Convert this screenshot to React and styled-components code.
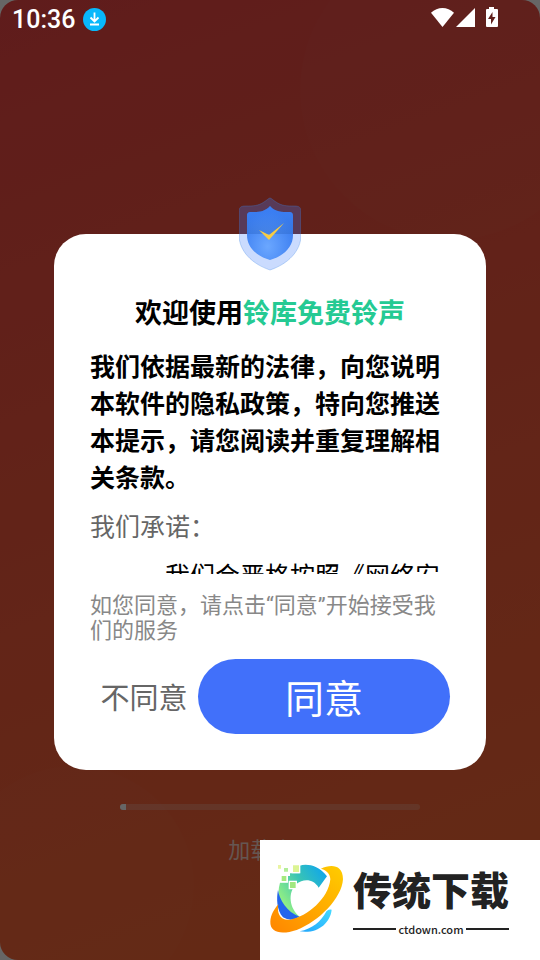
import React from "react";
import styled, { createGlobalStyle } from "styled-components";

const GlobalStyle = createGlobalStyle`
  *, *::before, *::after { box-sizing: border-box; }
  body {
    margin: 0;
    background: #fff;
    font-family: Roboto, "Noto Sans CJK SC", sans-serif;
  }
  button { font-family: inherit; border: 0; cursor: pointer; }
  p, h1 { margin: 0; }
`;

const Page = styled.div`
  display: grid;
  grid-template: minmax(100vh, auto) / minmax(0, 1fr);
  position: relative;
  overflow: hidden;
`;

const Layer = styled.div`
  grid-area: 1 / 1;
  display: flex;
  flex-direction: column;
`;

const Splash = styled(Layer)`
  position: relative;
  align-items: center;
  justify-content: flex-end;
  gap: 24px;
  padding-bottom: 93px;
  overflow: hidden;
  border-radius: 18px;
  background: linear-gradient(160deg, #ee4746 0%, #f75c3c 55%, #fc6b34 100%);
`;

const Bubble = styled.div`
  position: absolute;
  border-radius: 50%;
  background: rgba(255, 255, 255, 0.02);
  width: ${(p) => p.$size}px;
  height: ${(p) => p.$size}px;
`;

const TopBubble = styled(Bubble)`
  top: -60px;
  right: -60px;
`;

const BottomBubble = styled(Bubble)`
  bottom: -46px;
  left: -46px;
`;

const Track = styled.div`
  width: 300px;
  max-width: 80%;
  height: 6px;
  border-radius: 3px;
  overflow: hidden;
  background: rgba(255, 255, 255, 0.22);
`;

const Fill = styled.div`
  height: 100%;
  background: #fff;
`;

const Loading = styled.p`
  font-size: 22px;
  line-height: 33px;
  font-weight: 400;
  color: rgba(255, 255, 255, 0.75);
`;

const Shade = styled(Layer)`
  position: relative;
  background: rgba(0, 0, 0, 0.6);
`;

const StatusBar = styled.header`
  display: flex;
  align-items: center;
  justify-content: space-between;
  height: 40px;
  padding: 0 41px 2px 12px;
  color: #fff;
`;

const StatusGroup = styled.div`
  display: flex;
  align-items: center;
  gap: 8px;
`;

const SystemIcons = styled.div`
  display: flex;
  align-items: center;
  padding-bottom: 2px;
`;

const Clock = styled.time`
  padding-top: 2px;
  font-size: 25px;
  line-height: 38px;
  font-weight: 500;
`;

const DialogArea = styled.main`
  flex: 1;
  display: flex;
  align-items: center;
  justify-content: center;
  padding-top: 4px;
`;

const Dialog = styled.section`
  position: relative;
  width: 80%;
  padding: 60px 36px 36px;
  border-radius: 32px;
  background: #fff;
`;

const ShieldBadge = styled.div`
  position: absolute;
  top: -37px;
  left: 0;
  right: 0;
  display: flex;
  justify-content: center;
`;

const Title = styled.h1`
  font-size: 27px;
  line-height: 40px;
  font-weight: 700;
  text-align: center;
  color: #000;
`;

const AppName = styled.span`
  color: #25ca93;
`;

const Terms = styled.div`
  max-height: 225px;
  margin-top: 15px;
  overflow-y: auto;
  scrollbar-width: none;
  font-size: 25px;
  line-height: 37px;
  color: #000;
`;

const Lead = styled.p`
  font-weight: 700;
`;

const Promise = styled.p`
  margin-top: 12px;
  font-weight: 400;
  color: #666;
`;

const Clause = styled.p`
  margin-top: 12px;
  font-weight: 400;
  text-indent: 3em;
`;

const Notice = styled.p`
  margin-top: 19px;
  font-size: 22px;
  line-height: 25px;
  font-weight: 400;
  color: #888;
`;

const Actions = styled.div`
  display: flex;
  margin-top: 16px;
`;

const Decline = styled.button`
  flex: 3;
  padding: 0 0 2px;
  background: transparent;
  font-size: 29px;
  font-weight: 400;
  color: #666;
`;

const Accept = styled.button`
  flex: 7;
  height: 75px;
  padding: 0 0 2px;
  border-radius: 38px;
  background: #4170fa;
  font-size: 39px;
  font-weight: 400;
  color: #fff;
`;

const Brand = styled.aside`
  position: absolute;
  right: 0;
  bottom: 0;
  display: flex;
  align-items: center;
  gap: 8px;
  width: 280px;
  height: 120px;
  padding: 0 31px 0 9px;
  background: #fff;
`;

const BrandText = styled.div`
  flex: 1;
  color: #222;
`;

const BrandName = styled.p`
  padding-top: 2px;
  font-size: 39px;
  line-height: 56px;
  font-weight: 900;
  white-space: nowrap;
`;

const BrandUrl = styled.p`
  display: flex;
  align-items: center;
  gap: 2px;
  font-family: "Noto Sans CJK SC", sans-serif;
  font-size: 11px;
  line-height: 18px;
  font-weight: 500;

  &::before, &::after {
    content: "";
    flex: 1;
    height: 2px;
    background: #222;
  }
`;

const DownloadIcon = () => (
  <svg width="23" height="23" viewBox="0 0 23 23" aria-hidden="true">
    <circle cx="11.500" cy="11.500" r="11.500" fill="#08b8fb" />
    <path d="M11.500 4.500v8.500M7.500 9.500l4 4 4-4M7 16.500h9" fill="none" stroke="#fff" strokeWidth="1.800" />
  </svg>
);

const SignalIcons = () => (
  <svg width="68" height="22" viewBox="0 0 68 22" fill="#fff" aria-hidden="true">
    <path d="M0 5.800C6.500-.6 16.500-.6 23 5.800L11.500 20Z" />
    <path d="M44 1v19H25Z" />
    <path fillRule="evenodd" d="M58 0h5v2h3q1 0 1 1v16q0 1-1 1H56q-1 0-1-1V3q0-1 1-1h2ZM61.500 5L57 12h3v5.500l4.500-7.500h-3Z" />
  </svg>
);

const shieldOuter =
  "M31 1C32 1 34 3 37 5C43 9 48 9 55 9C60 9 62 10 62 15V38C62 54 49 67 31 73C13 67 0 54 0 38V15C0 10 2 9 7 9C14 9 19 9 25 5C28 3 30 1 31 1Z";
const shieldInner =
  "M31 9C36 15 43 15 50 15C53 15 54 16 54 19V38C54 50 45 59 31 63C17 59 8 50 8 38V19C8 16 9 15 12 15C19 15 26 15 31 9Z";

const Shield = () => (
  <svg width="62" height="74" viewBox="0 0 62 74" aria-hidden="true">
    <defs>
      <radialGradient id="shieldGlow" cx="0.45" cy="0.75" r="0.65">
        <stop offset="0" stopColor="#6ba7ff" />
        <stop offset="1" stopColor="#397cf0" />
      </radialGradient>
      <linearGradient id="shieldShade" x1="0" y1="0" x2="0" y2="1">
        <stop offset="0" stopColor="#3f86ff" stopOpacity="0.300" />
        <stop offset="1" stopColor="#23549f" stopOpacity="0.700" />
      </linearGradient>
      <clipPath id="shieldTop"><rect width="62" height="37" /></clipPath>
    </defs>
    <path d={shieldOuter} fill="#3f7ffa" fillOpacity="0.280" />
    <path d={shieldOuter} fill="none" stroke="#3b83e6" strokeOpacity="0.300" />
    <path d={shieldInner} fill="url(#shieldGlow)" />
    <path d={shieldInner} fill="url(#shieldShade)" clipPath="url(#shieldTop)" />
    <path d="M20 33l10 5L45 26L30 43Z" fill="#f8cc43" />
  </svg>
);

const BrandMark = () => (
  <svg width="76" height="76" viewBox="27 24 228 228" aria-hidden="true">
    <defs>
      <linearGradient id="ring" x1="0" y1="0.700" x2="1" y2="0">
        <stop offset="0" stopColor="#9cf47e" />
        <stop offset="0.500" stopColor="#38c4b5" />
        <stop offset="1" stopColor="#08a0f6" />
      </linearGradient>
      <linearGradient id="orbit" x1="0" y1="1" x2="1" y2="0">
        <stop offset="0" stopColor="#ff8500" />
        <stop offset="1" stopColor="#ffcd00" />
      </linearGradient>
      <linearGradient id="tail" x1="0" y1="1" x2="1" y2="0">
        <stop offset="0" stopColor="#20a5fc" />
        <stop offset="1" stopColor="#45d9ff" />
      </linearGradient>
    </defs>
    <path d="M201 67C174 32 140 29 119 35V58H90V66H84V86H60C50 122 56 162 73 190H121C87 164 83 116 108 91C132 72 161 76 176 101Z" fill="url(#ring)" />
    <path d="M54 108C58 137 81 174 118 188Q94 205 69 190C50 170 49 132 54 108Z" fill="#2365ec" />
    <path d="M119 232C157 224 183 203 200 171Q207 166 215 167C211 208 171 241 119 232Z" fill="url(#tail)" />
    <path d="M183 44C211 31 249 30 249 76C246 132 177 203 110 228C68 242 29 239 31 202C32 183 43 165 55 151C50 178 60 201 91 197C142 188 206 133 211 76C211 62 202 49 183 44Z" fill="url(#orbit)" />
    <g stroke="#fff" strokeWidth="4">
      <path d="M97 32h22v24H97Z" fill="#dcf493" />
      <path d="M70 40h16v15H70Z" fill="#b3ee98" />
      <path d="M52 31h13v15H52Z" fill="#e9f4a1" />
      <path d="M63 64h18v19H63Z" fill="#a4e97e" />
      <path d="M88 82h21v22H88Z" fill="#a1e780" />
    </g>
  </svg>
);

export default function App() {
  const progress = 2;
  return (
    <Page lang="zh-CN">
      <GlobalStyle />
      <Splash>
        <TopBubble $size={300} />
        <BottomBubble $size={240} />
        <Track role="progressbar" aria-label="加载进度" aria-valuenow={progress}>
          <Fill style={{ width: `${progress}%` }} />
        </Track>
        <Loading>加载中...</Loading>
      </Splash>
      <Shade>
        <StatusBar>
          <StatusGroup>
            <Clock>10:36</Clock>
            <DownloadIcon />
          </StatusGroup>
          <SystemIcons><SignalIcons /></SystemIcons>
        </StatusBar>
        <DialogArea>
          <Dialog role="dialog" aria-labelledby="welcome">
            <ShieldBadge><Shield /></ShieldBadge>
            <Title id="welcome">欢迎使用<AppName>铃库免费铃声</AppName></Title>
            <Terms>
              <Lead>我们依据最新的法律，向您说明本软件的隐私政策，特向您推送本提示，请您阅读并重复理解相关条款。</Lead>
              <Promise>我们承诺：</Promise>
              <Clause>我们会严格按照《网络安</Clause>
            </Terms>
            <Notice>如您同意，请点击“同意”开始接受我们的服务</Notice>
            <Actions>
              <Decline type="button">不同意</Decline>
              <Accept type="button">同意</Accept>
            </Actions>
          </Dialog>
        </DialogArea>
      </Shade>
      <Brand>
        <BrandMark />
        <BrandText>
          <BrandName>传统下载</BrandName>
          <BrandUrl>ctdown.com</BrandUrl>
        </BrandText>
      </Brand>
    </Page>
  );
}
